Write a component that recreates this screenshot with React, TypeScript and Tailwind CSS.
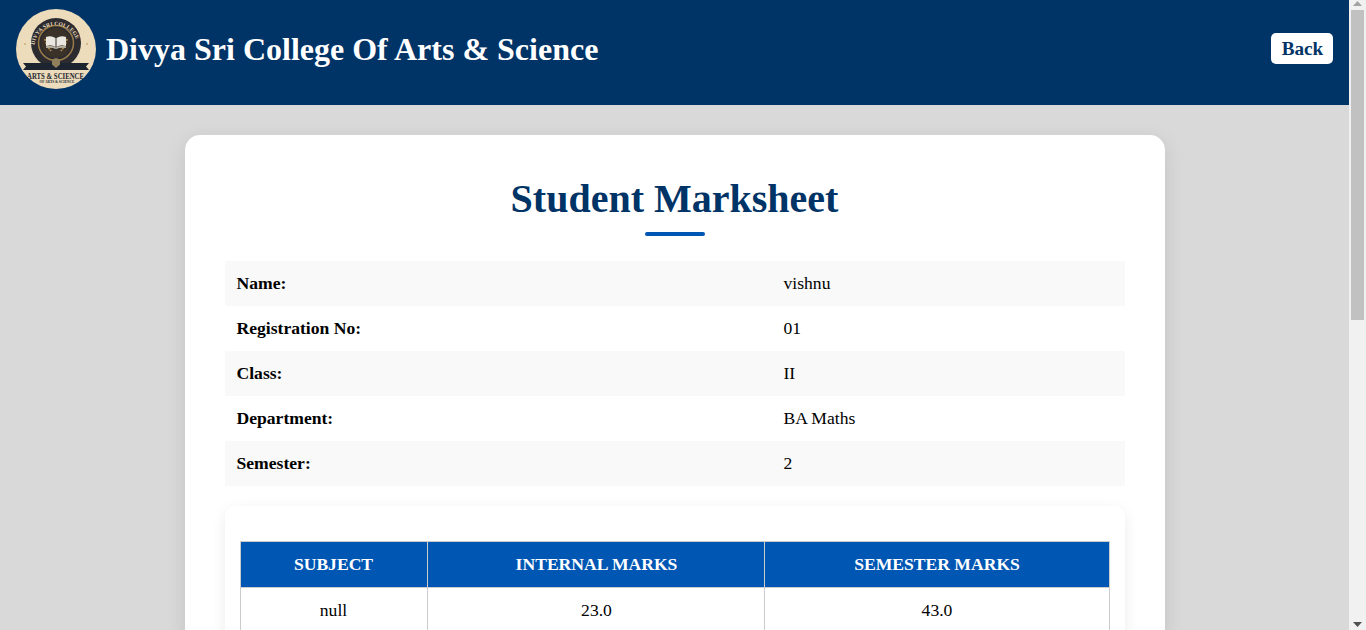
const details = [
  { label: "Name:", value: "vishnu" },
  { label: "Registration No:", value: "01" },
  { label: "Class:", value: "II" },
  { label: "Department:", value: "BA Maths" },
  { label: "Semester:", value: "2" },
];

const marks = [{ subject: "null", internal: "23.0", semester: "43.0" }];

function Logo() {
  return (
    <svg viewBox="0 0 80 80" className="h-20 w-20 shrink-0">
      <circle cx="40" cy="40" r="40" fill="#ecdcbc" />
      <circle cx="40" cy="34" r="25" fill="#2b2b30" />
      <circle cx="40" cy="34" r="17.500" fill="none" stroke="#9a7b48" strokeWidth="1.500" />
      <circle cx="40" cy="34" r="15" fill="#3a3228" />
      <path id="logo-arc" d="M18.500 38a21.500 21.500 0 0 1 43 0" fill="none" />
      <text fontSize="5.600" fontWeight="700" fill="#ecdcbc" fontFamily="Liberation Serif, serif">
        <textPath href="#logo-arc" startOffset="2">DIVYA SRI COLLEGE</textPath>
      </text>
      <path d="M29 30q2 7 6 12M51 30q-2 7-6 12" fill="none" stroke="#a98a52" strokeWidth="2" strokeDasharray="2 1" />
      <path d="M30 28q5-2 9.500 1v9q-4.500-3-9.500-1zM50 28q-5-2-9.500 1v9q4.500-3 9.500-1z" fill="#e9e7e0" />
      <path d="M30 37.500q5-2 10 1 5-3 10-1v1.500q-5-1-10 1-5-2-10-1z" fill="#b9b5a8" />
      <circle cx="9" cy="35" r="1" fill="#c9ae78" />
      <circle cx="71" cy="35" r="1" fill="#c9ae78" />
      <path d="M7 54h66l-3 3.500 3 3.500H7l3-3.500z" fill="#1c2430" />
      <path d="M40 49l4 1.500v5l-4 3.500-4-3.500v-5z" fill="#8f7f5c" />
      <text x="11" y="69.500" fontSize="8.500" fontWeight="700" fill="#23262e" fontFamily="Liberation Serif, serif" textLength="57" lengthAdjust="spacingAndGlyphs">
        ARTS &amp; SCIENCE
      </text>
      <text x="41" y="73.500" textAnchor="middle" fontSize="3.500" fontWeight="700" fill="#23262e" fontFamily="Liberation Serif, serif">
        OF ARTS &amp; SCIENCE
      </text>
    </svg>
  );
}

// the page scrolls in the reference, so its bar gets drawn as a column of its own
function ScrollBar() {
  return (
    <div className="flex h-full w-[17px] shrink-0 flex-col items-center bg-[#f1f1f1]">
      <svg viewBox="0 0 9 5" className="mt-[1px] h-[5px] w-[9px] shrink-0">
        <path d="M4.500 0L9 5H0z" fill="#a3a3a3" />
      </svg>
      <div className="mt-1 h-[310px] w-[13px] shrink-0 bg-[#c1c1c1]" />
      <svg viewBox="0 0 9 5" className="mt-auto mb-[3px] h-[5px] w-[9px] shrink-0">
        <path d="M0 0h9L4.500 5z" fill="#505050" />
      </svg>
    </div>
  );
}

export default function App() {
  return (
    <div className="flex h-screen overflow-hidden bg-[#d9d9d9] font-['Liberation_Serif',serif] text-black">
      <div className="min-w-0 flex-1">
        <header className="flex h-[105px] items-center justify-between bg-[#003366] px-4 pb-[7px]">
          <div className="flex items-center gap-2.5">
            <Logo />
            <h1 className="text-[32px] font-bold text-white">Divya Sri College Of Arts &amp; Science</h1>
          </div>
          <button className="mb-[1px] h-[31px] w-[62px] rounded-[5px] bg-white pt-[2px] pl-px text-[19.2px] font-bold text-[#003366]">
            Back
          </button>
        </header>

        <main className="mx-auto mt-[30px] w-[980px] rounded-[15px] bg-white p-10 shadow-[0_5px_20px_rgba(0,0,0,0.1)]">
          <h2 className="pt-[1px] text-center text-[40px] leading-[46px] font-bold text-[#003366]">Student Marksheet</h2>
          <div className="mx-auto mt-[10px] h-1 w-[60px] rounded-sm bg-[#0056b3]" />

          <div className="mt-[25px]">
            {details.map((d) => (
              <div key={d.label} className="grid h-[45px] grid-cols-[547px_1fr] items-center px-3 text-[17.6px] odd:bg-[#f9f9f9]">
                <span className="font-bold">{d.label}</span>
                <span>{d.value}</span>
              </div>
            ))}
          </div>

          <div className="mt-5 rounded-[10px] bg-white px-[15px] pt-[35px] pb-[15px] shadow-[0_4px_15px_rgba(0,0,0,0.08)]">
            <table className="w-[869px] table-fixed border-collapse text-center text-[17.6px]">
              <colgroup>
                <col className="w-[187px]" />
                <col className="w-[337px]" />
                <col className="w-[345px]" />
              </colgroup>
              <thead>
                <tr className="h-[46px] bg-[#0056b3] font-bold text-white">
                  <th className="border border-[#cccccc]">SUBJECT</th>
                  <th className="border border-[#cccccc] pl-0.5">INTERNAL MARKS</th>
                  <th className="border border-[#cccccc] pl-px">SEMESTER MARKS</th>
                </tr>
              </thead>
              <tbody>
                {marks.map((m, i) => (
                  <tr key={i} className="h-[46px]">
                    <td className="border border-[#cccccc]">{m.subject}</td>
                    <td className="border border-[#cccccc] pl-0.5">{m.internal}</td>
                    <td className="border border-[#cccccc] pl-px">{m.semester}</td>
                  </tr>
                ))}
              </tbody>
            </table>
          </div>
        </main>
      </div>
      <ScrollBar />
    </div>
  );
}
